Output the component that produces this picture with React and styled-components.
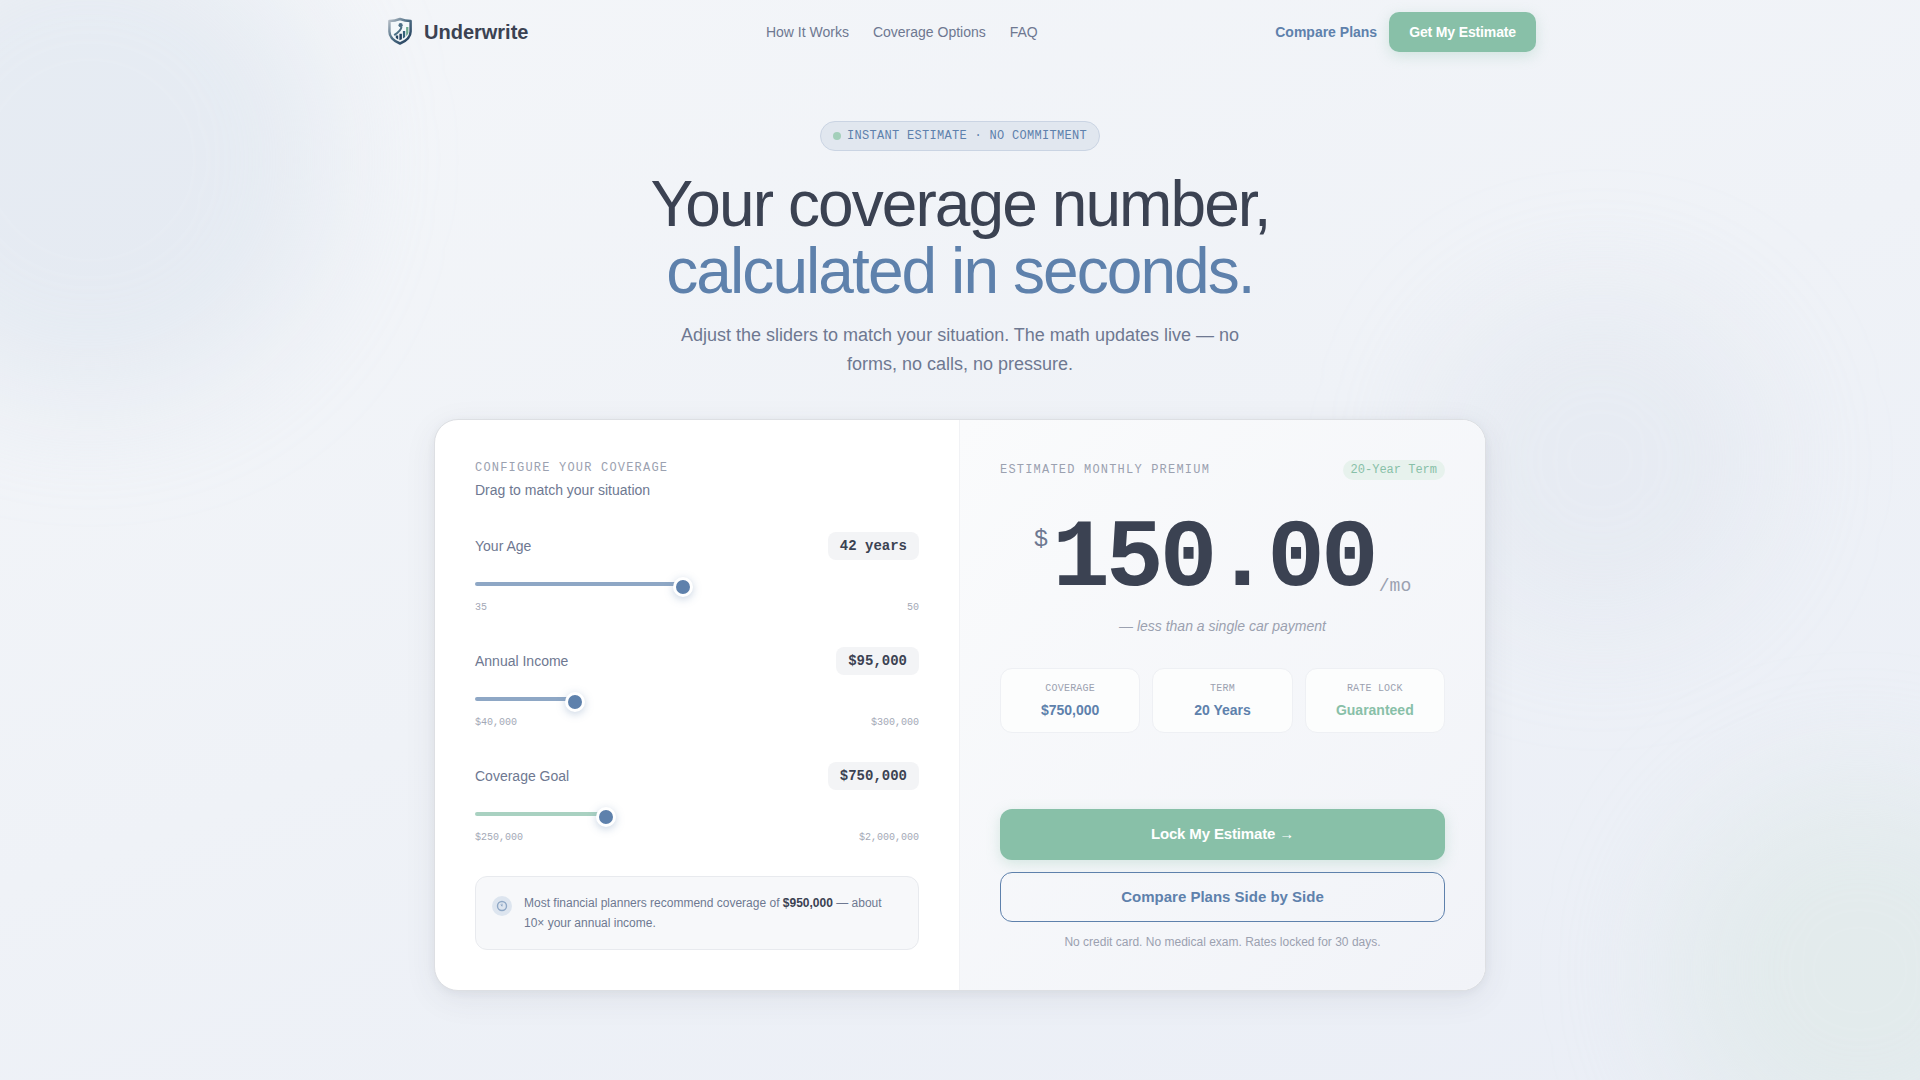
import React, { useState } from "react";
import styled, { createGlobalStyle } from "styled-components";

const sans = `"Liberation Sans", Arial, sans-serif`;
const mono = `"Liberation Mono", "Courier New", monospace`;

const GlobalStyle = createGlobalStyle`
  *, *::before, *::after { box-sizing: border-box; }
  body {
    margin: 0;
    font-family: ${sans};
    color: #3b4252;
    background: #f3f5f8;
  }
  h1, h2, p, dl, dd, dt { margin: 0; font-weight: 400; }
  button { font-family: inherit; cursor: pointer; }
`;

const Page = styled.div`
  position: relative;
  min-height: 100vh;
  overflow: hidden;
  background: linear-gradient(160deg, #f4f6f9 0%, #eff2f7 50%, #eaeef6 100%);
`;

const Blob = styled.div`
  position: absolute;
  width: ${(p) => p.$size}px;
  height: ${(p) => p.$size}px;
  border-radius: 50%;
  background: ${(p) => p.$color};
  filter: blur(60px);
  pointer-events: none;
`;
const BlobLeft = styled(Blob)` top: -80px; left: -150px; `;
const BlobRight = styled(Blob)` top: 290px; right: 150px; `;
const BlobBottom = styled(Blob)` bottom: -80px; right: -130px; `;

const Content = styled.div` position: relative; `;

const Nav = styled.header`
  max-width: 1200px;
  margin: 0 auto;
  padding: 12px 24px;
  display: flex;
  align-items: center;
  justify-content: space-between;
`;
const Brand = styled.a`
  display: flex;
  align-items: center;
  gap: 8px;
  font-size: 20px;
  font-weight: 700;
  color: #3b4252;
  text-decoration: none;
`;
const NavLinks = styled.nav` display: flex; gap: 24px; `;
const NavLink = styled.a`
  font-size: 14px;
  line-height: 20px;
  font-weight: ${(p) => (p.$strong ? 700 : 400)};
  color: ${(p) => (p.$strong ? "#5e81ac" : "#6e7891")};
  text-decoration: none;
`;
const NavActions = styled.div` display: flex; align-items: center; gap: 12px; `;
const NavButton = styled.button`
  height: 40px;
  padding: 0 20px;
  border: 0;
  border-radius: 10px;
  background: #88c0a8;
  color: #fff;
  font-size: 14px;
  font-weight: 700;
  letter-spacing: -0.01em;
  box-shadow: 0 4px 14px rgba(136, 192, 168, 0.3);
`;

const Hero = styled.section`
  display: flex;
  flex-direction: column;
  align-items: center;
  padding: 57px 24px 40px;
  text-align: center;
`;
const Badge = styled.div`
  display: flex;
  align-items: center;
  gap: 6px;
  height: 30px;
  padding: 0 12px;
  border: 1px solid #cad4e3;
  border-radius: 15px;
  background: #e1e7ef;
  font-family: ${mono};
  font-size: 12px;
  letter-spacing: 0.025em;
  color: #5e81ac;
`;
const Dot = styled.span`
  width: 8px;
  height: 8px;
  border-radius: 50%;
  background: #a3cfba;
`;
const Title = styled.h1`
  margin-top: 20px;
  font-size: 64px;
  line-height: 67px;
  letter-spacing: -0.03em;
  color: #3b4252;

  span { display: block; color: #5e81ac; }
`;
const Lead = styled.p`
  max-width: 576px;
  margin-top: 16px;
  font-size: 18px;
  line-height: 29px;
  color: #6e7891;
`;

const CardWrap = styled.main`
  max-width: 1100px;
  margin: 0 auto;
  padding: 0 24px 88px;
`;
const Card = styled.div`
  display: grid;
  grid-template-columns: 1fr 1fr;
  border: 1px solid #dddfe3;
  border-radius: 24px;
  overflow: hidden;
  background: #fff;
  box-shadow: 0 8px 32px rgba(59, 66, 82, 0.08), 0 2px 8px rgba(59, 66, 82, 0.06);
`;
const Panel = styled.section`
  display: flex;
  flex-direction: column;
  padding: 40px;
`;
const ConfigPanel = styled(Panel)` border-right: 1px solid #f1f2f5; `;
const ResultPanel = styled(Panel)`
  background: linear-gradient(135deg, #fafbfc 0%, #f1f3f8 100%);
`;
const Caption = styled.h2`
  font-family: ${mono};
  font-size: 12px;
  line-height: 16px;
  letter-spacing: 0.1em;
  text-transform: uppercase;
  color: #9ba1b0;
`;
const SubCaption = styled.p`
  margin-top: 4px;
  font-size: 14px;
  line-height: 20px;
  color: #6e7891;
`;

const Field = styled.div` margin-top: 32px; `;
const FieldHead = styled.div`
  display: flex;
  align-items: center;
  justify-content: space-between;
`;
const FieldLabel = styled.label` font-size: 14px; color: #6e7891; `;
const FieldValue = styled.output`
  padding: 4px 12px;
  border-radius: 8px;
  background: #f3f4f6;
  font-family: ${mono};
  font-size: 14px;
  line-height: 20px;
  font-weight: 700;
  color: #3b4252;
`;
const Slider = styled.div`
  display: grid;
  margin-top: 17px;
  height: 20px;
`;
const Fill = styled.div`
  grid-area: 1 / 1;
  height: 4px;
  margin-top: 5px;
  border-radius: 2px;
  background: ${(p) => p.$color};
`;
const Range = styled.input.attrs({ type: "range" })`
  grid-area: 1 / 1;
  width: 100%;
  height: 20px;
  margin: 0;
  appearance: none;
  background: transparent;
  cursor: pointer;

  &::-webkit-slider-thumb {
    appearance: none;
    width: 20px;
    height: 20px;
    border: 3px solid #fff;
    border-radius: 50%;
    background: #5e81ac;
    box-shadow: 0 2px 8px rgba(94, 129, 172, 0.35);
  }
`;
const Limits = styled.div`
  display: flex;
  justify-content: space-between;
  margin-top: 3px;
  font-family: ${mono};
  font-size: 10px;
  line-height: 15px;
  color: #a3a8b6;
`;

const Note = styled.aside`
  display: flex;
  align-items: flex-start;
  gap: 12px;
  margin-top: 31px;
  padding: 16px;
  border: 1px solid #e8eaee;
  border-radius: 12px;
  background: #f7f8fa;
`;
const NoteIcon = styled.span`
  flex: none;
  display: grid;
  place-items: center;
  width: 20px;
  height: 20px;
  margin-top: 3px;
  border-radius: 50%;
  background: #dde5ef;
`;
const NoteText = styled.p`
  font-size: 12px;
  line-height: 20px;
  color: #6e7891;

  strong { color: #3b4252; }
`;

const ResultHead = styled.div`
  display: flex;
  align-items: center;
  justify-content: space-between;
`;
const TermPill = styled.span`
  padding: 0 8px;
  border-radius: 10px;
  background: #e7f2ed;
  font-family: ${mono};
  font-size: 12px;
  line-height: 20px;
  color: #88c0a8;
`;
const Price = styled.div`
  display: flex;
  justify-content: center;
  gap: 4px;
  margin-top: 28px;
  font-family: ${mono};
`;
const Currency = styled.span`
  margin-top: 16px;
  font-size: 24px;
  line-height: 32px;
  color: #6e7891;
`;
const Amount = styled.span`
  font-size: 96px;
  line-height: 104px;
  font-weight: 700;
  letter-spacing: -0.04em;
`;
const Period = styled.span`
  align-self: flex-end;
  margin-bottom: 12px;
  font-size: 18px;
  line-height: 28px;
  color: #9ba1b0;
`;
const Remark = styled.p`
  margin-top: 4px;
  font-size: 14px;
  line-height: 20px;
  font-style: italic;
  text-align: center;
  color: #9ba1b0;
`;
const Stats = styled.dl`
  display: grid;
  grid-template-columns: repeat(3, 1fr);
  gap: 12px;
  margin-top: 32px;
`;
const Stat = styled.div`
  padding: 12px 8px;
  border: 1px solid #eef0f4;
  border-radius: 12px;
  background: #fcfdfd;
  text-align: center;
`;
const StatLabel = styled.dt`
  font-family: ${mono};
  font-size: 10px;
  line-height: 15px;
  letter-spacing: 0.02em;
  text-transform: uppercase;
  color: #9ba1b0;
`;
const StatValue = styled.dd`
  margin-top: 4px;
  font-size: 14px;
  line-height: 20px;
  font-weight: 700;
  color: ${(p) => (p.$good ? "#88c0a8" : "#5e81ac")};
`;
const Actions = styled.div`
  display: flex;
  flex-direction: column;
  gap: 12px;
  margin-top: auto;
`;
const ActionButton = styled.button`
  height: ${(p) => (p.$primary ? 51 : 50)}px;
  padding: 0 16px 2px;
  border: ${(p) => (p.$primary ? "0" : "1px solid #5e81ac")};
  border-radius: 12px;
  background: ${(p) => (p.$primary ? "#88c0a8" : "transparent")};
  color: ${(p) => (p.$primary ? "#fff" : "#5e81ac")};
  font-size: 15px;
  font-weight: 700;
  letter-spacing: ${(p) => (p.$primary ? "-0.01em" : "normal")};
  box-shadow: ${(p) => (p.$primary ? "0 4px 14px rgba(136, 192, 168, 0.3)" : "none")};
`;
const FinePrint = styled.p`
  font-size: 12px;
  line-height: 16px;
  text-align: center;
  color: #9ba1b0;
`;

const Logo = () => (
  <svg width="32" height="32" viewBox="0 0 32 32" aria-hidden="true">
    <defs>
      <linearGradient id="rim" x1="0" y1="0" x2="1" y2="1">
        <stop offset="0" stopColor="#b9c0c8" />
        <stop offset="0.45" stopColor="#4f6f86" />
        <stop offset="1" stopColor="#1f3a58" />
      </linearGradient>
    </defs>
    <path
      d="M16 3c3.400 1.200 7 1.900 10.600 2.100v10.300c0 6-4 9.300-10.600 12.100C9.400 24.700 5.400 21.400 5.400 15.400V5.100c3.600-.2 7.200-.9 10.600-2.100z"
      fill="#f4f8fa"
      stroke="url(#rim)"
      strokeWidth="2.500"
      strokeLinejoin="round"
    />
    <path d="M11.800 22v-2.600h2.400v4.200zM15.400 24.200v-6.400h2.500v5.400z" fill="#23425f" />
    <path d="M18.900 22.600v-7.600h2.300v6z" fill="#33617a" />
    <path d="M22.100 20v-9h2.300v5.200c0 1.400-.9 2.800-2.300 3.800z" fill="#6fa98f" />
    <circle cx="16.600" cy="9.200" r="2.100" fill="#4d6f86" />
    <path d="M17.400 10.900c-.2 3.300-2.800 5.400-7.200 8.200" fill="none" stroke="#4d7186" strokeWidth="2" />
  </svg>
);

const ClockIcon = () => (
  <svg width="12" height="12" viewBox="0 0 12 12" fill="none" stroke="#8fa8c6" aria-hidden="true">
    <circle cx="6" cy="6" r="4.500" strokeWidth="1.400" />
    <path d="M6 3.600V6.200M4.800 4.600L6 6.200" strokeWidth="1" />
  </svg>
);

const money = (n) => "$" + n.toLocaleString("en-US");
const years = (n) => `${n} years`;

function SliderField({ id, label, value, min, max, step, color, format, formatLimit, onChange }) {
  const percent = ((value - min) / (max - min)) * 100;
  return (
    <Field>
      <FieldHead>
        <FieldLabel htmlFor={id}>{label}</FieldLabel>
        <FieldValue htmlFor={id}>{format(value)}</FieldValue>
      </FieldHead>
      <Slider>
        <Fill $color={color} style={{ width: `${percent}%` }} />
        <Range
          id={id}
          min={min}
          max={max}
          step={step}
          value={value}
          onChange={(e) => onChange(Number(e.target.value))}
        />
      </Slider>
      <Limits>
        <span>{formatLimit(min)}</span>
        <span>{formatLimit(max)}</span>
      </Limits>
    </Field>
  );
}

export default function App() {
  const [age, setAge] = useState(42);
  const [income, setIncome] = useState(95000);
  const [goal, setGoal] = useState(750000);

  return (
    <Page>
      <GlobalStyle />
      <BlobLeft $size={480} $color="rgba(203, 214, 230, 0.32)" />
      <BlobRight $size={340} $color="rgba(210, 218, 230, 0.24)" />
      <BlobBottom $size={380} $color="rgba(214, 230, 222, 0.4)" />

      <Content>
        <Nav>
          <Brand href="#">
            <Logo />
            Underwrite
          </Brand>
          <NavLinks>
            <NavLink href="#how">How It Works</NavLink>
            <NavLink href="#coverage">Coverage Options</NavLink>
            <NavLink href="#faq">FAQ</NavLink>
          </NavLinks>
          <NavActions>
            <NavLink href="#plans" $strong>Compare Plans</NavLink>
            <NavButton type="button">Get My Estimate</NavButton>
          </NavActions>
        </Nav>

        <Hero>
          <Badge>
            <Dot />
            INSTANT ESTIMATE · NO COMMITMENT
          </Badge>
          <Title>
            Your coverage number,
            <span>calculated in seconds.</span>
          </Title>
          <Lead>
            Adjust the sliders to match your situation. The math updates live — no forms, no calls, no pressure.
          </Lead>
        </Hero>

        <CardWrap>
          <Card>
            <ConfigPanel>
              <Caption>Configure Your Coverage</Caption>
              <SubCaption>Drag to match your situation</SubCaption>
              <SliderField
                id="age" label="Your Age" value={age} min={35} max={50} step={1}
                color="#8ea7c5" format={years} formatLimit={String} onChange={setAge}
              />
              <SliderField
                id="income" label="Annual Income" value={income} min={40000} max={300000} step={5000}
                color="#8ea7c5" format={money} formatLimit={money} onChange={setIncome}
              />
              <SliderField
                id="goal" label="Coverage Goal" value={goal} min={250000} max={2000000} step={50000}
                color="#a9d1c1" format={money} formatLimit={money} onChange={setGoal}
              />
              <Note>
                <NoteIcon><ClockIcon /></NoteIcon>
                <NoteText>
                  Most financial planners recommend coverage of <strong>{money(income * 10)}</strong> — about 10× your annual income.
                </NoteText>
              </Note>
            </ConfigPanel>

            <ResultPanel>
              <ResultHead>
                <Caption>Estimated Monthly Premium</Caption>
                <TermPill>20-Year Term</TermPill>
              </ResultHead>
              <Price>
                <Currency>$</Currency>
                <Amount>150.00</Amount>
                <Period>/mo</Period>
              </Price>
              <Remark>— less than a single car payment</Remark>
              <Stats>
                <Stat>
                  <StatLabel>Coverage</StatLabel>
                  <StatValue>{money(goal)}</StatValue>
                </Stat>
                <Stat>
                  <StatLabel>Term</StatLabel>
                  <StatValue>20 Years</StatValue>
                </Stat>
                <Stat>
                  <StatLabel>Rate Lock</StatLabel>
                  <StatValue $good>Guaranteed</StatValue>
                </Stat>
              </Stats>
              <Actions>
                <ActionButton type="button" $primary>Lock My Estimate →</ActionButton>
                <ActionButton type="button">Compare Plans Side by Side</ActionButton>
                <FinePrint>No credit card. No medical exam. Rates locked for 30 days.</FinePrint>
              </Actions>
            </ResultPanel>
          </Card>
        </CardWrap>
      </Content>
    </Page>
  );
}
